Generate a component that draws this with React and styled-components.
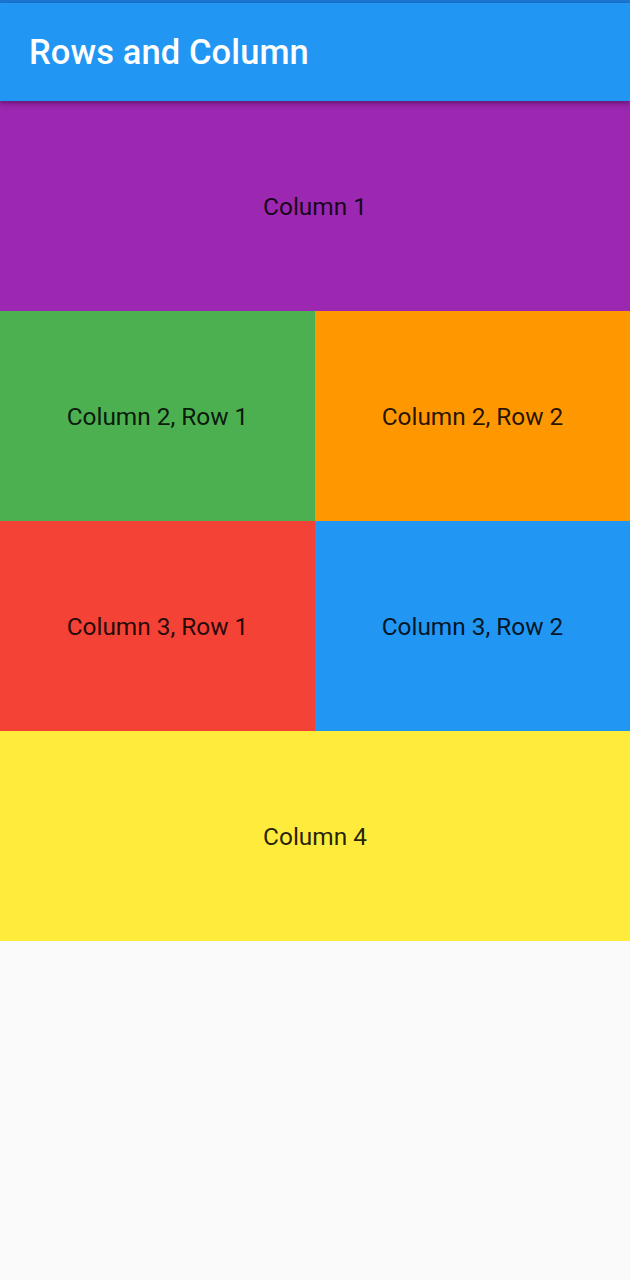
import React from "react";
import styled, { createGlobalStyle } from "styled-components";

const GlobalStyle = createGlobalStyle`
  html, body {
    margin: 0;
    padding: 0;
    background: #fafafa;
    font-family: Roboto, "Noto Sans", sans-serif;
  }
`;

const Page = styled.div`
  display: flex;
  flex-direction: column;
  width: 630px;
  min-height: 1280px;
  background: #fafafa;
`;

const StatusStrip = styled.div`
  height: 3px;
  background: #1976d2;
`;

const AppBar = styled.header`
  position: relative;
  z-index: 1;
  display: flex;
  align-items: center;
  height: 98px;
  padding: 0 29px;
  box-sizing: border-box;
  background: #2196f3;
  box-shadow: 0 2px 4px rgba(0, 0, 0, 0.25), 0 4px 6px rgba(0, 0, 0, 0.12);
`;

const Title = styled.h1`
  margin: 0;
  color: #fff;
  font-size: 34.5px;
  font-weight: 500;
  letter-spacing: 0.1px;
`;

const Row = styled.div`
  display: flex;
  height: 210px;
`;

const Cell = styled.div`
  flex: 1;
  display: flex;
  align-items: center;
  justify-content: center;
  background: ${(p) => p.$color};
  color: rgba(0, 0, 0, 0.87);
  font-size: 24.4px;
`;

const App = () => {
  return (
    <>
      <GlobalStyle />
      <Page>
        <StatusStrip />
        <AppBar>
          <Title>Rows and Column</Title>
        </AppBar>
        <Row>
          <Cell $color="#9c27b0">Column 1</Cell>
        </Row>
        <Row>
          <Cell $color="#4caf50">Column 2, Row 1</Cell>
          <Cell $color="#ff9800">Column 2, Row 2</Cell>
        </Row>
        <Row>
          <Cell $color="#f44336">Column 3, Row 1</Cell>
          <Cell $color="#2196f3">Column 3, Row 2</Cell>
        </Row>
        <Row>
          <Cell $color="#ffeb3b">Column 4</Cell>
        </Row>
      </Page>
    </>
  );
};

export default App;
